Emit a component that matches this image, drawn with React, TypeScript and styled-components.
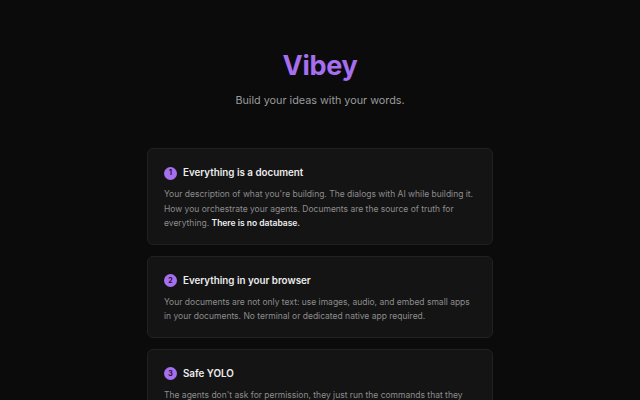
import React from "react";
import styled, { createGlobalStyle } from "styled-components";

const GlobalStyle = createGlobalStyle`
  html, body {
    margin: 0;
    padding: 0;
    background: #0b0b0c;
    overflow: hidden;
  }
  body {
    font-family: Inter, "Noto Sans", "Liberation Sans", sans-serif;
    color: #e6e6e6;
  }
`;

const Page = styled.main`
  min-height: 400px;
  display: flex;
  flex-direction: column;
  align-items: center;
  padding-top: 48px;
`;

const Title = styled.h1`
  margin: 0;
  font-size: 27px;
  line-height: 36px;
  font-weight: 700;
  color: #a66ff0;
  letter-spacing: -0.3px;
`;

const Tagline = styled.p`
  margin: 9px 0 0;
  font-size: 10.8px;
  line-height: 16px;
  color: #9a9a9a;
`;

const CardList = styled.section`
  margin-top: 39px;
  width: 346px;
  display: flex;
  flex-direction: column;
  gap: 10.5px;
`;

const Card = styled.article`
  background: #141415;
  border: 1px solid #212123;
  border-radius: 6px;
  padding: 16px 16px 13.5px 16px;
`;

const CardHeading = styled.h2`
  margin: 0;
  display: flex;
  align-items: center;
  gap: 6px;
  font-size: 9.8px;
  line-height: 16px;
  font-weight: 600;
  color: #ececec;
`;

const Badge = styled.span`
  width: 13px;
  height: 13px;
  border-radius: 50%;
  background: #a66ff0;
  color: #1a1024;
  font-size: 7px;
  font-weight: 700;
  display: inline-flex;
  align-items: center;
  justify-content: center;
`;

const CardText = styled.p`
  margin: 6px 0 0;
  font-size: 8.5px;
  line-height: 14.5px;
  color: #8c8c8c;

  & strong {
    color: #eeeeee;
    font-weight: 600;
  }
`;

const features = [
  {
    title: "Everything is a document",
    body: (
      <>
        Your description of what you're building. The dialogs with AI while
        building it. How you orchestrate your agents. Documents are the source
        of truth for everything. <strong>There is no database.</strong>
      </>
    ),
  },
  {
    title: "Everything in your browser",
    body: (
      <>
        Your documents are not only text: use images, audio, and embed small
        apps in your documents. No terminal or dedicated native app required.
      </>
    ),
  },
  {
    title: "Safe YOLO",
    body: (
      <>
        The agents don't ask for permission, they just run the commands that
        they need, inside a sandbox that keeps your machine safe.
      </>
    ),
  },
];

const App = () => {
  return (
    <>
      <GlobalStyle />
      <Page>
        <Title>Vibey</Title>
        <Tagline>Build your ideas with your words.</Tagline>
        <CardList>
          {features.map((f, i) => (
            <Card key={f.title}>
              <CardHeading>
                <Badge>{i + 1}</Badge>
                {f.title}
              </CardHeading>
              <CardText>{f.body}</CardText>
            </Card>
          ))}
        </CardList>
      </Page>
    </>
  );
};

export default App;
